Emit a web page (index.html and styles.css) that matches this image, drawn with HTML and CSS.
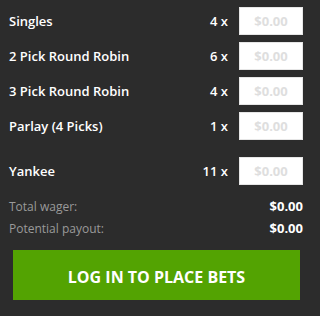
FILE: index.html
```html
<!DOCTYPE html>
<html>
<head>
<meta charset="utf-8">
<link rel="stylesheet" href="styles.css">
</head>
<body>
<div class="slip">
  <div class="group">
    <div class="row"><span class="label">Singles</span><span class="mult">4 x</span><input class="wager" type="text" placeholder="$0.00"></div>
    <div class="row"><span class="label">2 Pick Round Robin</span><span class="mult">6 x</span><input class="wager" type="text" placeholder="$0.00"></div>
    <div class="row"><span class="label">3 Pick Round Robin</span><span class="mult">4 x</span><input class="wager" type="text" placeholder="$0.00"></div>
    <div class="row"><span class="label">Parlay (4 Picks)</span><span class="mult">1 x</span><input class="wager" type="text" placeholder="$0.00"></div>
  </div>
  <div class="group extra">
    <div class="row"><span class="label">Yankee</span><span class="mult">11 x</span><input class="wager" type="text" placeholder="$0.00"></div>
  </div>
  <div class="totals">
    <div class="total"><span class="tlabel">Total wager:</span><span class="tvalue">$0.00</span></div>
    <div class="total"><span class="tlabel">Potential payout:</span><span class="tvalue">$0.00</span></div>
  </div>
  <button class="login">LOG IN TO PLACE BETS</button>
</div>
</body>
</html>
```
FILE: styles.css
```css
html, body {
  margin: 0;
  padding: 0;
  background: #2c2c2c;
}
body {
  font-family: "Open Sans", "Liberation Sans", sans-serif;
  color: #ffffff;
  width: 317px;
  height: 316px;
  overflow: hidden;
}
.slip {
  padding: 3px 14px 0 9px;
  display: flex;
  flex-direction: column;
}
.group {
  display: flex;
  flex-direction: column;
}
.group.extra {
  margin-top: 10px;
}
.row {
  height: 35px;
  display: flex;
  align-items: center;
}
.label {
  flex: 1;
  font-size: 13px;
  font-weight: 600;
}
.mult {
  font-size: 13px;
  font-weight: 600;
  margin-right: 11px;
}
.wager {
  box-sizing: border-box;
  width: 64px;
  height: 28px;
  border: 1px solid #e6e6e6;
  background: #ffffff;
  font-family: "Open Sans", "Liberation Sans", sans-serif;
  font-size: 13px;
  font-weight: 700;
  text-align: center;
  padding: 0;
  outline: none;
}
.wager::placeholder {
  color: #dedede;
}
.totals {
  margin-top: 7px;
  display: flex;
  flex-direction: column;
}
.total {
  height: 22px;
  display: flex;
  align-items: center;
  justify-content: space-between;
}
.tlabel {
  font-size: 12px;
  color: #9a9a9a;
}
.tvalue {
  font-size: 13px;
  font-weight: 700;
  color: #ffffff;
}
.login {
  margin: 11px 3px 0 4px;
  height: 50px;
  padding: 4px 0 0 0;
  border: none;
  background: #53a302;
  color: #ffffff;
  font-family: "Open Sans", "Liberation Sans", sans-serif;
  font-size: 16px;
  font-weight: 700;
  cursor: pointer;
}
```
